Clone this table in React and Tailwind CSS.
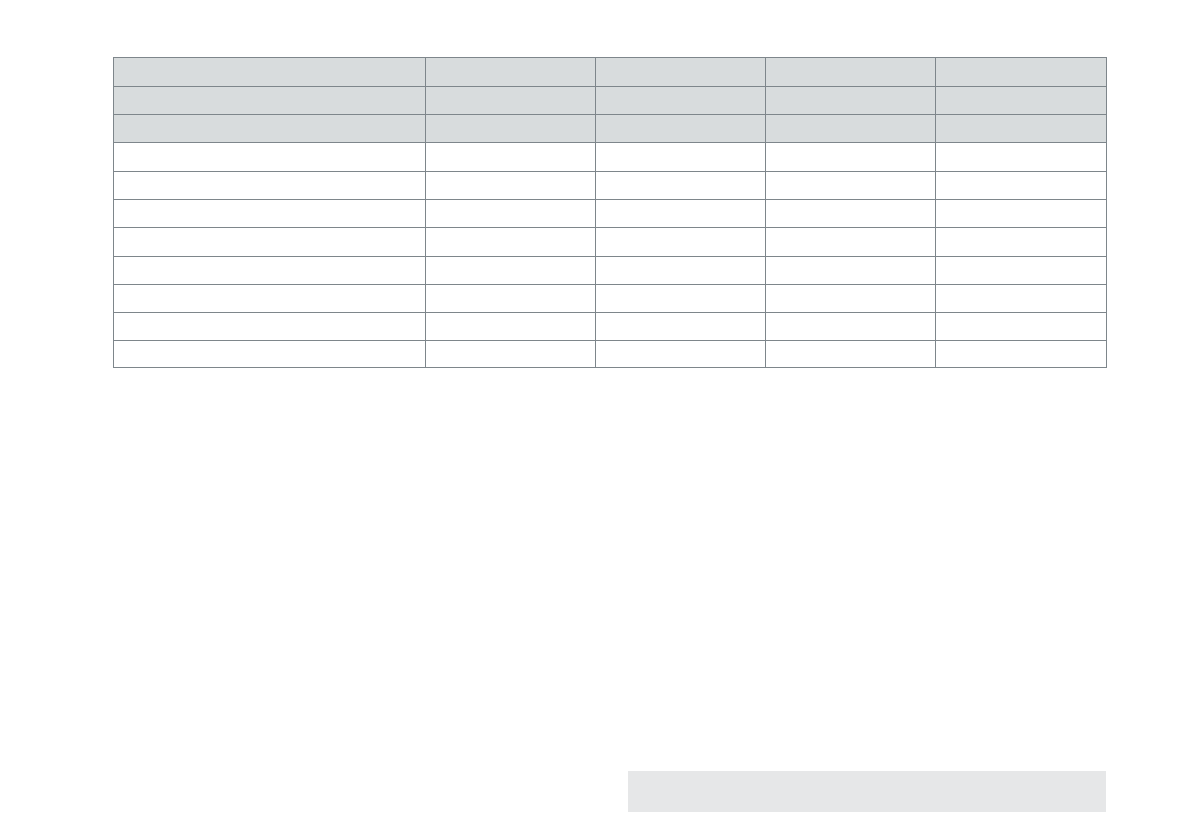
export default function App() {
  const heights = [29, 28, 28, 29, 28, 28, 29, 28, 28, 28, 27];
  const cols = [312, 170, 170, 170, 171];
  return (
    <div className="w-[1191px] h-[839px] bg-white relative" style={{ fontFamily: '"Liberation Sans", sans-serif' }}>
      <div className="pt-[57px] pl-[113px]">
        <table className="border-collapse table-fixed w-[994px]">
          <colgroup>
            {cols.map((w, i) => (
              <col key={i} style={{ width: w }} />
            ))}
          </colgroup>
          <tbody>
            {heights.map((h, r) => (
              <tr key={r} style={{ height: h }} className={r < 3 ? 'bg-[#d8dcdd]' : 'bg-white'}>
                {cols.map((_, c) => (
                  <td key={c} className="border border-[#7e868b] p-0"></td>
                ))}
              </tr>
            ))}
          </tbody>
        </table>
      </div>
      <div className="absolute left-[628px] top-[771px] w-[478px] h-[41px] bg-[#e6e7e8]"></div>
    </div>
  );
}
